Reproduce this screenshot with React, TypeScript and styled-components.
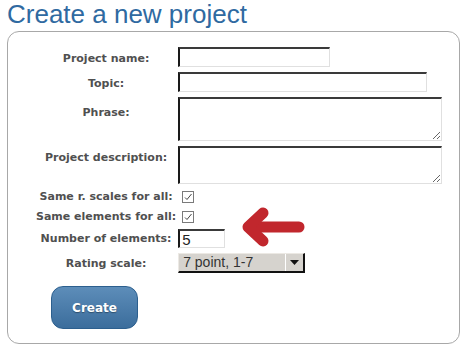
import styled, { createGlobalStyle } from "styled-components";

const Global = createGlobalStyle`
  body {
    margin: 0;
    background: #fff;
    font-family: "Liberation Sans", Arial, sans-serif;
  }
`;

const Page = styled.div`
  padding: 0 6px 0 7px;
`;

const Title = styled.h1`
  margin: 0;
  height: 31px;
  font-family: "Liberation Sans", Arial, sans-serif;
  font-weight: normal;
  font-size: 26px;
  line-height: 28px;
  color: #2f6aa1;
`;

const Panel = styled.div`
  position: relative;
  width: 453px;
  box-sizing: border-box;
  border: 1px solid #a8a8a8;
  border-radius: 12px;
  padding: 15px 0 14px 26px;
`;

const Form = styled.div`
  display: grid;
  grid-template-columns: auto 1fr;
  column-gap: 0;
  row-gap: 5px;
`;

const Label = styled.div<{ $top?: number }>`
  justify-self: center;
  align-self: ${(p) => (p.$top !== undefined ? "start" : "center")};
  padding: ${(p) => p.$top ?? 0}px 2px 0;
  font-family: "DejaVu Sans", Verdana, sans-serif;
  font-weight: bold;
  font-size: 11px;
  line-height: 13px;
  color: #505050;
  white-space: nowrap;
`;

const Field = styled.div<{ $h?: number }>`
  display: flex;
  align-items: center;
  ${(p) => (p.$h ? `height: ${p.$h}px;` : "")}
`;

const TextInput = styled.input<{ $w: number; $h?: number }>`
  box-sizing: border-box;
  width: ${(p) => p.$w}px;
  height: ${(p) => p.$h ?? 20}px;
  margin: 0;
  padding: 0 2px;
  border-style: solid;
  border-width: 2px 1px 1px 2px;
  border-color: #3a3a3a #e0e0e0 #e0e0e0 #1a1a1a;
  background: #fff;
  font-family: "Liberation Sans", Arial, sans-serif;
  font-size: 15px;
  color: #222;
  outline: none;
`;

const TextArea = styled.textarea<{ $h: number }>`
  box-sizing: border-box;
  width: 264px;
  height: ${(p) => p.$h}px;
  margin: 0;
  border-style: solid;
  border-width: 2px 1px 1px 2px;
  border-color: #3a3a3a #e0e0e0 #e0e0e0 #1a1a1a;
  background: #fff;
  display: block;
  outline: none;
`;

const Check = styled.span`
  box-sizing: border-box;
  width: 12px;
  height: 12px;
  margin-left: 4px;
  border: 1px solid #7a7a7a;
  background: #fff;
  display: flex;
  align-items: center;
  justify-content: center;
`;

const Select = styled.div`
  box-sizing: border-box;
  width: 127px;
  height: 20px;
  display: flex;
  align-items: stretch;
  background: #d6d3ce;
  border-style: solid;
  border-width: 1px 2px 2px 1px;
  border-color: #ece9e4 #111 #111 #ece9e4;
  font-family: "Liberation Sans", Arial, sans-serif;
  font-size: 14px;
  color: #333;
`;

const SelectText = styled.span`
  flex: 1;
  padding-left: 4px;
  line-height: 17px;
`;

const SelectButton = styled.span`
  width: 17px;
  border-left: 1px solid #fff;
  display: flex;
  align-items: center;
  justify-content: center;
`;

const Button = styled.button`
  margin: 13px 0 0 17px;
  width: 87px;
  height: 43px;
  border: 1px solid #2c5f8e;
  border-radius: 12px;
  background: linear-gradient(#5d8db9, #3b6d9c);
  color: #fff;
  font-family: "DejaVu Sans", Verdana, sans-serif;
  font-weight: bold;
  font-size: 12px;
  text-shadow: 0 1px 1px rgba(0, 0, 0, 0.35);
  cursor: pointer;
`;

const Arrow = styled.svg`
  position: absolute;
  left: 229px;
  top: 171px;
`;

const CheckBox = () => (
  <Check>
    <svg width="10" height="10" viewBox="0 0 10 10">
      <path d="M2 5.5 L4 7.5 L8.5 2" fill="none" stroke="#444" strokeWidth="1" />
    </svg>
  </Check>
);

export default function App() {
  return (
    <Page>
      <Global />
      <Title>Create a new project</Title>
      <Panel>
        <Form>
          <Label $top={5}>Project name:</Label>
          <Field>
            <TextInput $w={152} />
          </Field>
          <Label $top={5}>Topic:</Label>
          <Field>
            <TextInput $w={249} />
          </Field>
          <Label $top={9}>Phrase:</Label>
          <Field>
            <TextArea $h={44} />
          </Field>
          <Label $top={5}>Project description:</Label>
          <Field>
            <TextArea $h={38} />
          </Field>
          <Label>Same r. scales for all:</Label>
          <Field $h={15}>
            <CheckBox />
          </Field>
          <Label>Same elements for all:</Label>
          <Field $h={15}>
            <CheckBox />
          </Field>
          <Label>Number of elements:</Label>
          <Field>
            <TextInput $w={47} $h={19} defaultValue="5" />
          </Field>
          <Label>Rating scale:</Label>
          <Field>
            <Select>
              <SelectText>7 point, 1-7</SelectText>
              <SelectButton>
                <svg width="9" height="5" viewBox="0 0 9 5">
                  <path d="M0 0 H9 L4.5 5 Z" fill="#111" />
                </svg>
              </SelectButton>
            </Select>
          </Field>
        </Form>
        <Button>Create</Button>
        <Arrow width="72" height="48" viewBox="0 0 72 48">
          <g fill="none" stroke="#c1272d" strokeWidth="11" strokeLinecap="round" strokeLinejoin="round">
            <path d="M62 24 H14" />
            <path d="M26 10 L11 24 L26 38" />
          </g>
        </Arrow>
      </Panel>
    </Page>
  );
}
